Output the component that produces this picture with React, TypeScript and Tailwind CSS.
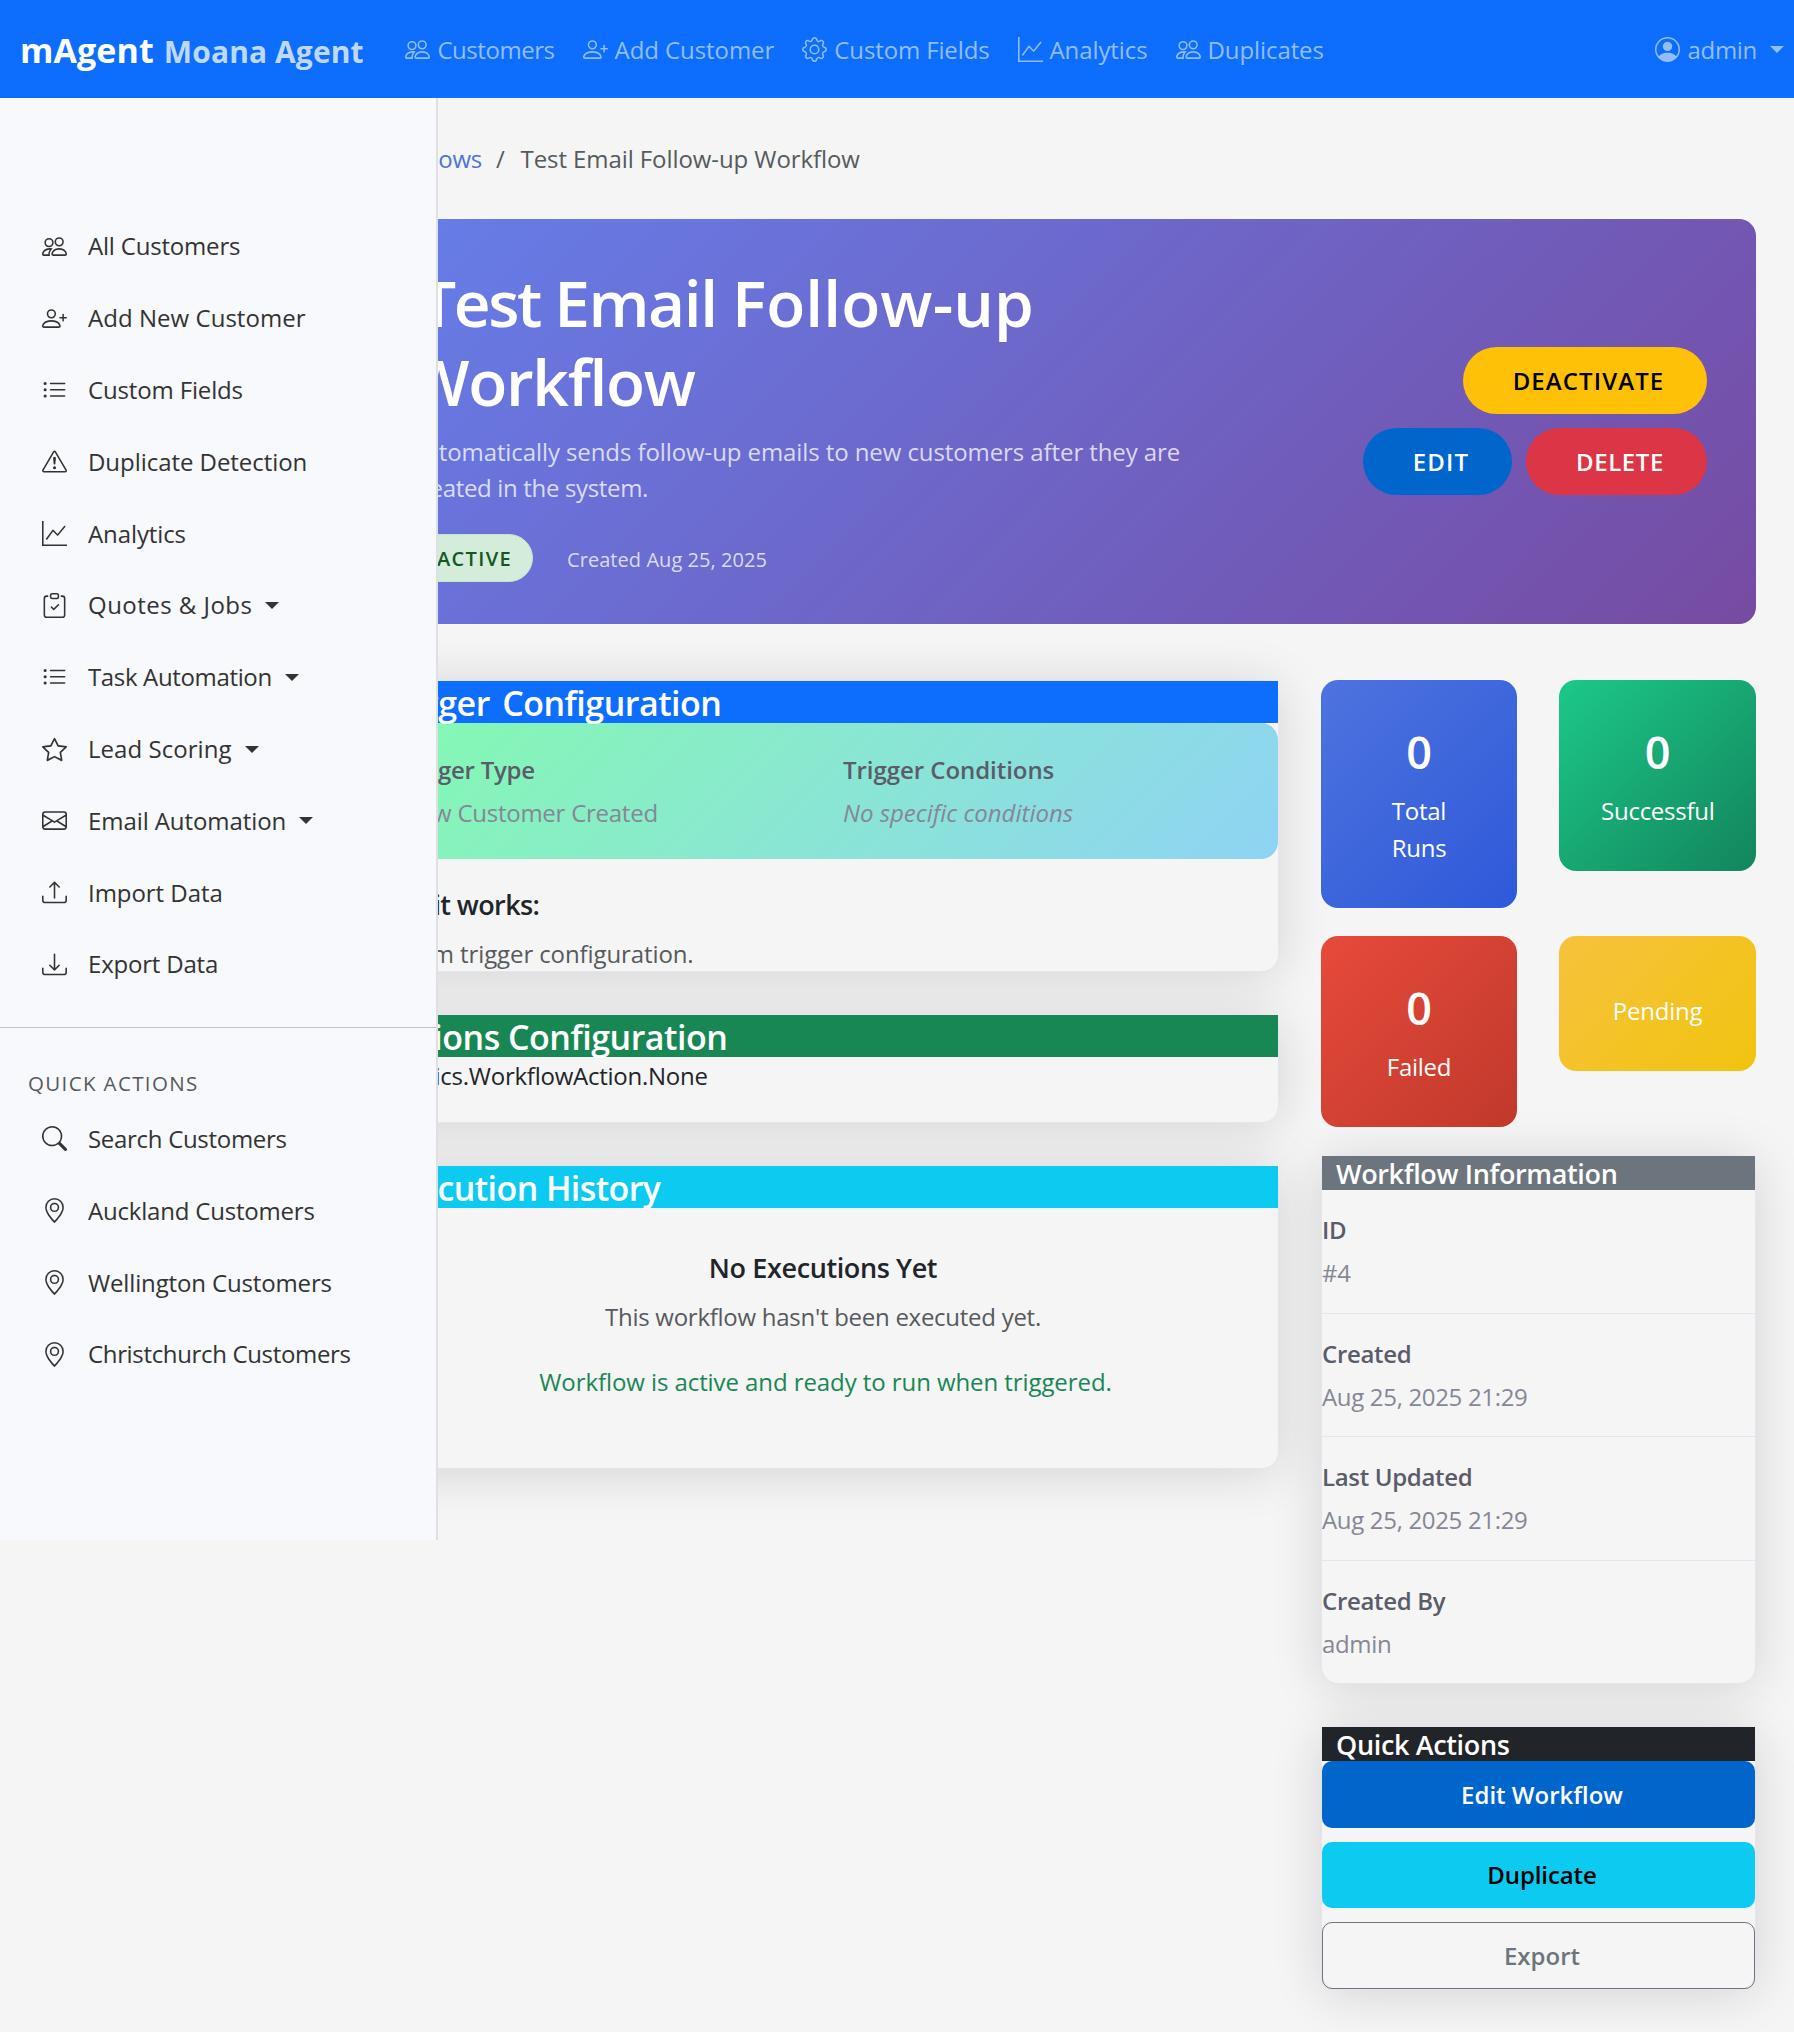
import type { ReactNode } from "react";
import type { IconType } from "react-icons";
import {
  BsPeople,
  BsPersonPlus,
  BsGear,
  BsGraphUp,
  BsPersonCircle,
  BsListUl,
  BsExclamationTriangle,
  BsClipboardCheck,
  BsStar,
  BsEnvelope,
  BsUpload,
  BsDownload,
  BsSearch,
  BsGeoAlt,
} from "react-icons/bs";

type Item = { label: string; icon: IconType; track: string; menu?: boolean };

const navItems: Item[] = [
  { label: "Customers", icon: BsPeople, track: "tracking-[-0.45px]" },
  { label: "Add Customer", icon: BsPersonPlus, track: "tracking-[-0.07px]" },
  { label: "Custom Fields", icon: BsGear, track: "tracking-[-0.12px]" },
  { label: "Analytics", icon: BsGraphUp, track: "tracking-[-0.1px]" },
  { label: "Duplicates", icon: BsPeople, track: "tracking-[-0.09px]" },
];

const sideItems: Item[] = [
  { label: "All Customers", icon: BsPeople, track: "tracking-[-0.19px]" },
  { label: "Add New Customer", icon: BsPersonPlus, track: "tracking-[0.04px]" },
  { label: "Custom Fields", icon: BsListUl, track: "tracking-[-0.15px]" },
  { label: "Duplicate Detection", icon: BsExclamationTriangle, track: "tracking-[-0.05px]" },
  { label: "Analytics", icon: BsGraphUp, track: "tracking-[-0.1px]" },
  { label: "Quotes & Jobs", icon: BsClipboardCheck, track: "tracking-[0.47px]", menu: true },
  { label: "Task Automation", icon: BsListUl, track: "tracking-[-0.35px]", menu: true },
  { label: "Lead Scoring", icon: BsStar, track: "tracking-[0.05px]", menu: true },
  { label: "Email Automation", icon: BsEnvelope, track: "tracking-[-0.08px]", menu: true },
  { label: "Import Data", icon: BsUpload, track: "tracking-[-0.05px]" },
  { label: "Export Data", icon: BsDownload, track: "tracking-[-0.2px]" },
];

const quickItems: Item[] = [
  { label: "Search Customers", icon: BsSearch, track: "tracking-[-0.3px]" },
  { label: "Auckland Customers", icon: BsGeoAlt, track: "tracking-[-0.2px]" },
  { label: "Wellington Customers", icon: BsGeoAlt, track: "tracking-[-0.14px]" },
  { label: "Christchurch Customers", icon: BsGeoAlt, track: "tracking-[-0.34px]" },
];

const info = [
  { label: "ID", value: "#4" },
  { label: "Created", value: "Aug 25, 2025 21:29" },
  { label: "Last Updated", value: "Aug 25, 2025 21:29" },
  { label: "Created By", value: "admin" },
];

function Caret({ className }: { className: string }) {
  return (
    <span className={`h-0 w-0 border-x-[7px] border-t-[7px] border-x-transparent ${className}`} />
  );
}

function SideLink({ item }: { item: Item }) {
  const Icon = item.icon;
  return (
    <a className="flex h-[71.8px] items-center pl-[42px] text-[#333]">
      <Icon className="mr-[21px] size-[25px]" />
      <span className={item.track}>{item.label}</span>
      {item.menu && <Caret className="ml-[13px] border-t-[#333]" />}
    </a>
  );
}

function Card({ children, className = "" }: { children: ReactNode; className?: string }) {
  return (
    <section
      className={`rounded-[17px] border border-[#e3e6f0] bg-[#f5f5f5] shadow-[0_4px_49px_rgba(30,30,32,0.15)] ${className}`}
    >
      {children}
    </section>
  );
}

function Stat({ value, label, className }: { value?: string; label: string; className: string }) {
  return (
    <div className={`rounded-[17px] px-[42px] py-[42px] text-center text-white ${className}`}>
      {value && <div className="h-14 pt-0.5 text-[45px] leading-[56px] font-semibold">{value}</div>}
      <div className="mt-[14px] leading-[37px] tracking-[-0.25px]">{label}</div>
    </div>
  );
}

export default function App() {
  return (
    <div className="h-[2032px] w-[1794px] overflow-hidden bg-[#f5f5f5] font-['Open_Sans',sans-serif] text-[24px] text-[#212529]">
      <nav className="relative z-20 flex h-[98px] items-center bg-[#0d6efd] pt-px pr-[10px] pl-5 text-[#92befe]">
        <div className="flex w-[385.4px] items-baseline gap-[10px] pt-0.5 font-bold">
          <span className="text-[34px] tracking-[0.1px] text-white">mAgent</span>
          <span className="text-[30px] tracking-[0.1px] text-[#bfd8fe]">Moana Agent</span>
        </div>
        <div className="flex gap-[28px]">
          {navItems.map(({ label, icon: Icon, track }) => (
            <a key={label} className="flex items-center gap-[7px]">
              <Icon className="size-[25px]" />
              <span className={`pt-px ${track}`}>{label}</span>
            </a>
          ))}
        </div>
        <div className="ml-auto flex items-center">
          <BsPersonCircle className="size-[25px]" />
          <span className="ml-[7px] pt-px tracking-[-0.3px]">admin</span>
          <Caret className="ml-[13px] border-t-[#92befe]" />
        </div>
      </nav>

      <div className="flex items-start">
        <aside className="relative z-10 h-[1442px] w-[438px] shrink-0 border-r-2 border-[#dee0e3] bg-[#f8f9fc] pt-[112.6px]">
          {sideItems.map((item) => (
            <SideLink key={item.label} item={item} />
          ))}
          <hr className="mt-[26.7px] border-[#c3c4c8]" />
          <h6 className="mt-[42.5px] mb-[7.5px] pl-7 text-[20.5px] leading-[25px] font-medium tracking-[1.36px] text-[#55595c]">
            QUICK ACTIONS
          </h6>
          {quickItems.map((item) => (
            <SideLink key={item.label} item={item} />
          ))}
        </aside>

        <main className="-ml-[71px] w-[1389px] pt-[43px]">
          <div className="flex h-9 items-center leading-9 whitespace-nowrap text-[#565a5d]">
            <a className="w-[114px] text-right tracking-[-0.3px] text-[#4e73df]">Workflows</a>
            <span className="ml-[15px] w-[24.5px]">/</span>
            <span className="tracking-[-0.08px]">Test Email Follow-up Workflow</span>
          </div>

          <header className="mt-[42px] flex h-[405px] justify-between rounded-[17px] bg-[linear-gradient(135deg,#667eea_0%,#764ba2_100%)] pr-[49px] pl-[42px] text-white">
            <div className="pt-[43.5px] whitespace-nowrap">
              <h1 className="text-[64px] leading-[79px] font-semibold">
                <div className="pl-[11px] tracking-[0.1px]">
                  <span className="tracking-[-2.4px]">Test </span>
                  <span className="tracking-[-1.4px]">Email </span>
                  Follow-up
                </div>
                <div className="tracking-[-1.3px]">Workflow</div>
              </h1>
              <p className="mt-[13px] leading-9 tracking-[-0.09px] text-white/75">
                Automatically sends follow-up emails to new customers after they are
                <br />
                <span className="tracking-[-0.34px]">created in the system.</span>
              </p>
              <div className="mt-[28.5px] flex items-center text-[20px]">
                <span className="flex h-12 w-[124px] items-center rounded-full border border-[#c3e6cb] bg-[#d4edda] pt-0.5 pl-[27px] font-semibold tracking-[1.35px] text-[#155724]">
                  ACTIVE
                </span>
                <span className="mt-[3px] ml-[34px] tracking-[0.06px] text-white/75">Created Aug 25, 2025</span>
              </div>
            </div>
            <div className="flex flex-col items-end gap-[13.5px] pt-32 font-semibold">
              <button className="h-[67px] w-[244px] rounded-full bg-[#ffc107] pl-[7px] tracking-[1.1px] text-black">
                DEACTIVATE
              </button>
              <div className="flex gap-[14px]">
                <button className="h-[67px] w-[149px] rounded-full bg-[#0066cc] pt-px pl-[7px] tracking-[1.2px]">
                  EDIT
                </button>
                <button className="h-[67px] w-[181px] rounded-full bg-[#dc3545] pt-px pl-[7px] tracking-[0.6px]">
                  DELETE
                </button>
              </div>
            </div>
          </header>

          <div className="mt-14 flex items-start gap-[42px]">
            <div className="flex w-[912px] flex-col gap-[42px] whitespace-nowrap">
              <Card>
                <h5 className="bg-[#0d6efd] pt-0.5 pl-[10px] text-[34px] leading-[40px] font-semibold tracking-[-0.5px] text-white [word-spacing:4px]">
                  Trigger Configuration
                </h5>
                <div className="grid h-[136px] grid-cols-[448px_1fr] content-start gap-y-[7px] rounded-[17px] bg-[linear-gradient(135deg,#84fab0_0%,#8fd3f4_100%)] pt-[28.5px] pl-[27px] leading-9">
                  <div className="font-semibold tracking-[-0.25px] text-[#5a5c69]">Trigger Type</div>
                  <div className="font-semibold tracking-[-0.05px] text-[#5a5c69]">Trigger Conditions</div>
                  <div className="pl-[7px] tracking-[-0.25px] text-[#858796]">New Customer Created</div>
                  <div className="text-[#858796] italic">No specific conditions</div>
                </div>
                <h6 className="mt-[29px] pl-0.5 text-[27px] leading-[34px] font-semibold tracking-[-0.6px]">
                  How it works:
                </h6>
                <p className="mt-[14px] h-[34.5px] leading-9 tracking-[-0.1px] text-[#565a5d]">
                  Custom trigger configuration.
                </p>
              </Card>

              <Card>
                <h5 className="bg-[#198754] pt-0.5 pl-[14px] text-[34px] leading-[40px] font-semibold tracking-[-0.5px] text-white">
                  Actions Configuration
                </h5>
                <p className="pb-[28.5px] leading-[37px] tracking-[-0.25px]">analytics.WorkflowAction.None</p>
              </Card>

              <Card>
                <h5 className="bg-[#0dcaf0] pt-0.5 pl-[14px] text-[34px] leading-[40px] font-semibold tracking-[-0.6px] text-white">
                  Execution History
                </h5>
                <div className="pt-[43px] pb-[68px] text-center">
                  <h6 className="text-[27px] leading-[34px] font-semibold tracking-[-0.39px]">No Executions Yet</h6>
                  <p className="mt-[14px] leading-9 tracking-[-0.27px] text-[#565a5d]">
                    This workflow hasn't been executed yet.
                  </p>
                  <p className="mt-[28.5px] pl-[5px] leading-9 tracking-[-0.08px] text-[#198754]">
                    Workflow is active and ready to run when triggered.
                  </p>
                </div>
              </Card>
            </div>

            <div className="w-[435px]">
              <div className="grid grid-cols-[196px_197px] items-start gap-x-[42px] gap-y-7">
                <Stat
                  value="0"
                  label="Total Runs"
                  className="bg-[linear-gradient(135deg,#4e73df_0%,#2e59d9_100%)]"
                />
                <Stat
                  value="0"
                  label="Successful"
                  className="bg-[linear-gradient(135deg,#1cc88a_0%,#13855c_100%)]"
                />
                <Stat value="0" label="Failed" className="bg-[linear-gradient(135deg,#e74a3b_0%,#c0392b_100%)]" />
                <Stat label="Pending" className="bg-[linear-gradient(135deg,#f6c23e_0%,#f1c40f_100%)]" />
              </div>

              <Card className="mt-7">
                <h6 className="bg-[#6c757d] pt-px pl-[14px] text-[27px] leading-[33px] font-semibold tracking-[-0.35px] text-white">
                  Workflow Information
                </h6>
                <dl className="divide-y divide-[#e3e6f0]">
                  {info.map(({ label, value }) => (
                    <div key={label} className="pt-[21px] pb-[21.5px] leading-[37px]">
                      <dt className="font-semibold tracking-[-0.33px] text-[#5a5c69]">{label}</dt>
                      <dd className="mt-1.5 tracking-[-0.33px] text-[#858796]">{value}</dd>
                    </div>
                  ))}
                </dl>
              </Card>

              <Card className="mt-[42px]">
                <h6 className="bg-[#212529] pt-px pl-[14px] text-[27px] leading-[33px] font-semibold tracking-[-0.35px] text-white">
                  Quick Actions
                </h6>
                <div className="flex flex-col gap-[14px] font-semibold">
                  <button className="h-[66.5px] rounded-[10px] bg-[#0066cc] pt-px pl-[7px] text-white">
                    Edit Workflow
                  </button>
                  <button className="h-[66.5px] rounded-[10px] bg-[#0dcaf0] pl-[7px] tracking-[-0.1px] text-black">
                    Duplicate
                  </button>
                  <button className="h-[66.5px] rounded-[10px] border border-[#6c757d] pt-px pl-[7px] text-[#6c757d]">
                    Export
                  </button>
                </div>
              </Card>
            </div>
          </div>
        </main>
      </div>
    </div>
  );
}
